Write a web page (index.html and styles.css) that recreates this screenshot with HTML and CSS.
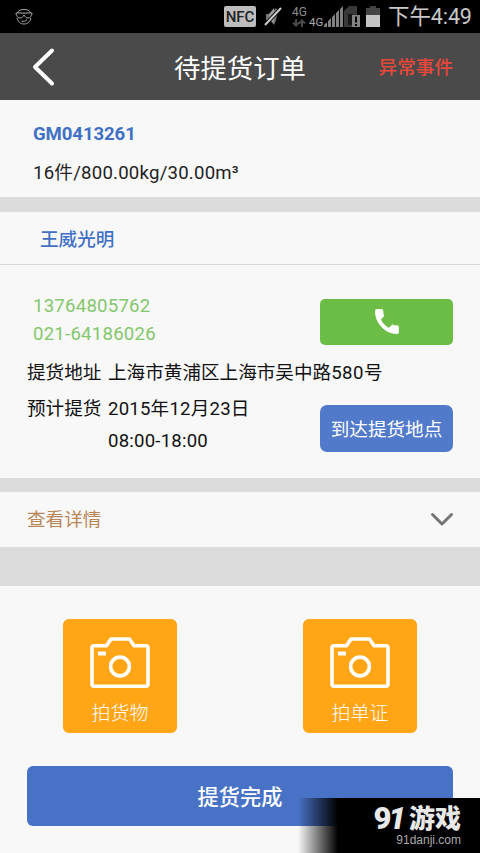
FILE: index.html
```html
<!DOCTYPE html>
<html lang="zh-CN">
<head>
<meta charset="utf-8">
<title>待提货订单</title>
<link rel="stylesheet" href="styles.css">
</head>
<body>
<div class="status">
  <svg class="face" width="18" height="18" viewBox="0 0 18 18" fill="none" stroke="#aaa" stroke-width="1">
    <path d="M2.500 4.500C4 2 6.500 1.500 9 1.500s5 .5 6.500 3M2 10c1 4 3.500 6 7 6s6-2 7-6M6.500 13c2 .8 4 .4 5.500-1.500"/>
    <path d="M1 5h16v1.500l-1 .8c0 1.700-1 2.700-3 2.700S10 9 9.500 7.300h-1C8 9 7 10 5 10S2 9 2 7.300L1 6.500z"/>
  </svg>
  <div class="status-right">
    <span class="nfc">NFC</span>
    <svg class="mute" width="18" height="21" viewBox="0 0 18 21">
      <path d="M2 8h4l6-6q2 2 1.500 5L12 14l-2 5-4-5H2z" fill="#777"/>
      <path d="M5 13V8l5-6v15" fill="#999"/><path d="M1 19L17 2" stroke="#000" stroke-width="4"/><path d="M1 19L17 2" stroke="#ccc" stroke-width="2"/>
    </svg>
    <span class="data"><span>4G</span><svg width="14" height="8" viewBox="0 0 14 8" fill="none" stroke="#484848" stroke-width="2"><path d="M4 0v6M1 3.500l3 3 3-3M10 8V2M7 4.500l3-3 3 3"/></svg></span>
    <span class="net">4G</span>
    <svg class="signal" width="37" height="22" viewBox="0 0 37 22">
      <path d="M0 21v-2l3-3v5zM4 21v-6l3-3v9zM8 21V11l3-3v13zM12 21V7l3-3v17zM16 21V3l3-3v21z" fill="#808080"/>
      <path d="M20 21V5l5-5h8v21z" fill="#393939"/><path d="M24 19V8h5v11z" fill="#161616"/><path d="M28 9h8v12h-8z" fill="#858585"/><path d="M31 10.500h2v6h-2zM31 18h2v2h-2z" fill="#000"/>
    </svg>
    <svg class="battery" width="14" height="21" viewBox="0 0 14 21"><path d="M4 0h6v2h4v7H0V2h4z" fill="#444"/><path d="M0 9h14v12H0z" fill="#c4c4c4"/></svg>
    <span class="clock">下午4:49</span>
  </div>
</div>
<header class="header">
  <svg class="back" width="26" height="40" viewBox="0 0 26 40"><path d="M22 3.500L5 20l17 16.500" fill="none" stroke="#fff" stroke-width="4" stroke-linecap="round" stroke-linejoin="round"/></svg>
  <h1 class="title">待提货订单</h1>
  <a class="issue">异常事件</a>
</header>
<main>
  <section class="summary">
    <div class="order-no">GM0413261</div>
    <div class="cargo">16件/800.00kg/30.00m³</div>
  </section>
  <section class="pickup">
    <h2 class="company">王威光明</h2>
    <div class="details">
      <div class="row contact">
        <div class="phones"><div>13764805762</div><div>021-64186026</div></div>
        <button class="call" aria-label="电话"><svg width="24" height="25" viewBox="3 3 18 18" preserveAspectRatio="none"><path fill="#fff" stroke="#fff" stroke-width=".5" d="M7.200 10.600c1.300 2.600 3.500 4.900 6.200 6.200l2-2c.3-.3.7-.4 1-.3 1.100.4 2.300.6 3.500.6.500 0 .9.500.9 1v3.700c0 .6-.4 1-1 1C10.600 20.800 3.200 13.200 3.200 4.200c0-.5.400-1 1-1h3.700c.6 0 1 .5 1 1 0 1.200.2 2.400.6 3.500.1.300 0 .7-.3 1z"/></svg></button>
      </div>
      <div class="line address"><span class="label">提货地址</span><span>上海市黄浦区上海市吴中路<span class="digits">580</span>号</span></div>
      <div class="row schedule">
        <div class="line"><span class="label">预计提货</span><div class="time"><div>2015年12月23日</div><div>08:00-18:00</div></div></div>
        <button class="arrive">到达提货地点</button>
      </div>
    </div>
  </section>
  <section class="more">
    <span>查看详情</span>
    <svg width="24" height="15" viewBox="0 0 24 15"><path d="M2.500 2.500L12 12l9.500-9.500" fill="none" stroke="#757575" stroke-width="3" stroke-linecap="round" stroke-linejoin="round"/></svg>
  </section>
  <section class="actions">
    <div class="photos">
      <button class="photo">
        <svg width="60" height="52" viewBox="0 0 60 52" fill="none" stroke="#fff" stroke-width="3.600" stroke-linejoin="round"><path d="M4 8.800h12.500L21 2h18.500L44 8.800h12q2 0 2 2v36q0 2.500-2 2.500H4q-2 0-2-2.500v-36q0-2 2-2z"/><circle cx="30" cy="29.500" r="9.400"/><path d="M8 16.500h8" stroke-width="4"/></svg>
        <span>拍货物</span>
      </button>
      <button class="photo">
        <svg width="60" height="52" viewBox="0 0 60 52" fill="none" stroke="#fff" stroke-width="3.600" stroke-linejoin="round"><path d="M4 8.800h12.500L21 2h18.500L44 8.800h12q2 0 2 2v36q0 2.500-2 2.500H4q-2 0-2-2.500v-36q0-2 2-2z"/><circle cx="30" cy="29.500" r="9.400"/><path d="M8 16.500h8" stroke-width="4"/></svg>
        <span>拍单证</span>
      </button>
    </div>
    <button class="finish">提货完成</button>
  </section>
</main>
<div class="watermark">
  <div class="brand"><span class="num">9<i>1</i></span><span class="game">游戏</span></div>
  <div class="site">91danji.com</div>
</div>
</body>
</html>
```
FILE: styles.css
```css
* { box-sizing: border-box; }
body {
  margin: 0;
  width: 480px;
  height: 853px;
  position: relative;
  overflow: hidden;
  background: #dcdcdc;
  color: #111;
  font: 18.6px/28px Roboto, "Noto Sans CJK SC", sans-serif;
}
button { border: 0; padding: 0; font: inherit; color: #fff; }
h1, h2 { margin: 0; }
svg { display: block; flex: none; }

.status {
  height: 33px;
  padding: 0 8px 0 15px;
  background: #000;
  display: flex;
  justify-content: space-between;
  align-items: center;
  color: #c8c8c8;
}
.status-right { display: flex; align-items: center; height: 33px; }
.nfc {
  width: 32px; height: 21px;
  border-radius: 2px;
  background: #bdbdbd;
  color: #222;
  font: 500 15px/22px Roboto, sans-serif;
  text-align: center;
}
.mute { margin-left: 8px; }
.data { width: 15px; margin-left: 10px; font: 12px/12px Roboto, sans-serif; color: #8c8c8c; }
.data svg { margin-top: 1px; }
.net { margin: 10px 0 0 2px; width: 14px; font: 11.500px/14px Roboto, sans-serif; color: #aaa; }
.signal { margin-left: 1px; }
.battery { margin-left: 5px; }
.clock { margin-left: 8px; width: 84px; font-size: 21.300px; letter-spacing: -.1px; white-space: nowrap; }

.header {
  height: 67px;
  padding: 1px 27px 0 30px;
  background: #4a4a4a;
  display: grid;
  grid-template-columns: 75px 1fr 75px;
  align-items: center;
}
.title { padding: 3px 3px 0 0; color: #fff; font-size: 26.400px; font-weight: 400; text-align: center; }
.issue { padding-top: 2px; color: #e8483b; font-weight: 500; text-align: right; white-space: nowrap; }
.clock { font-size: 21.500px; letter-spacing: -.1px; }

.summary { height: 97px; padding: 20px 33px; background: #f8f8f8; }
.order-no { color: #4270c4; font-weight: 700; letter-spacing: -.1px; }
.cargo { margin-top: 11px; color: #222; letter-spacing: .22px; }

.pickup { height: 266px; margin-top: 15px; background: #f8f8f8; }
.company {
  height: 53px;
  padding-left: 40px;
  border-bottom: 1px solid #d8d8d8;
  color: #4270c4;
  font-size: 18.600px;
  font-weight: 500;
  line-height: 56px;
}
.details { padding: 27px 27px 0; }
.row { display: flex; justify-content: space-between; }
.phones { padding-left: 6px; color: #84c76c; letter-spacing: .23px; }
.digits { letter-spacing: .5px; }
.call {
  width: 133px; height: 46px;
  margin-top: 7px;
  border-radius: 5px;
  background: #6cbd45;
  display: flex;
  justify-content: center;
  padding-top: 10px;
}
.line { display: flex; gap: 7px; white-space: nowrap; }
.label { width: 74px; }
.address { margin-top: 11px; }
.schedule { margin-top: 8px; }
.time { display: grid; row-gap: 4px; letter-spacing: .2px; }
.arrive {
  width: 133px; height: 47px;
  margin-top: 10px;
  padding-top: 2px;
  border-radius: 7px;
  background: #527acb;
}

.more {
  height: 55px;
  margin-top: 14px;
  padding: 0 26px 0 27px;
  background: #f8f8f8;
  display: flex;
  align-items: center;
  justify-content: space-between;
  color: #b78758;
}

.actions { height: 267px; margin-top: 39px; padding: 33px 27px 0; background: #f8f8f8; }
.photos { display: flex; justify-content: space-between; padding: 0 36px; }
.photo {
  width: 114px; height: 114px;
  border-radius: 6px;
  background: #ffa516;
  display: flex;
  flex-direction: column;
  align-items: center;
  padding-top: 18px;
  font-size: 19px;
  font-weight: 300;
}
.photo span { margin-top: 11px; }
.finish {
  width: 426px; height: 60px;
  margin-top: 33px;
  padding-top: 3px;
  border-radius: 6px;
  background: #4872c6;
  font-size: 21.200px;
  font-weight: 500;
}

.watermark {
  position: absolute;
  right: 0; bottom: 0;
  width: 182px; height: 55px;
  padding: 6px 19px 0 0;
  background: linear-gradient(90deg, transparent, #000 40px);
  color: #e8e8e8;
}
.brand { display: flex; justify-content: flex-end; align-items: center; height: 29px; gap: 6px; }
.num { font: 900 31px/29px Roboto, sans-serif; letter-spacing: -3px; }
.game { font-size: 26px; font-weight: 900; line-height: 26px; }
.site { padding-top: 1px; text-align: right; color: #aaa; font: 12px/12px "Liberation Sans", sans-serif; }
```
